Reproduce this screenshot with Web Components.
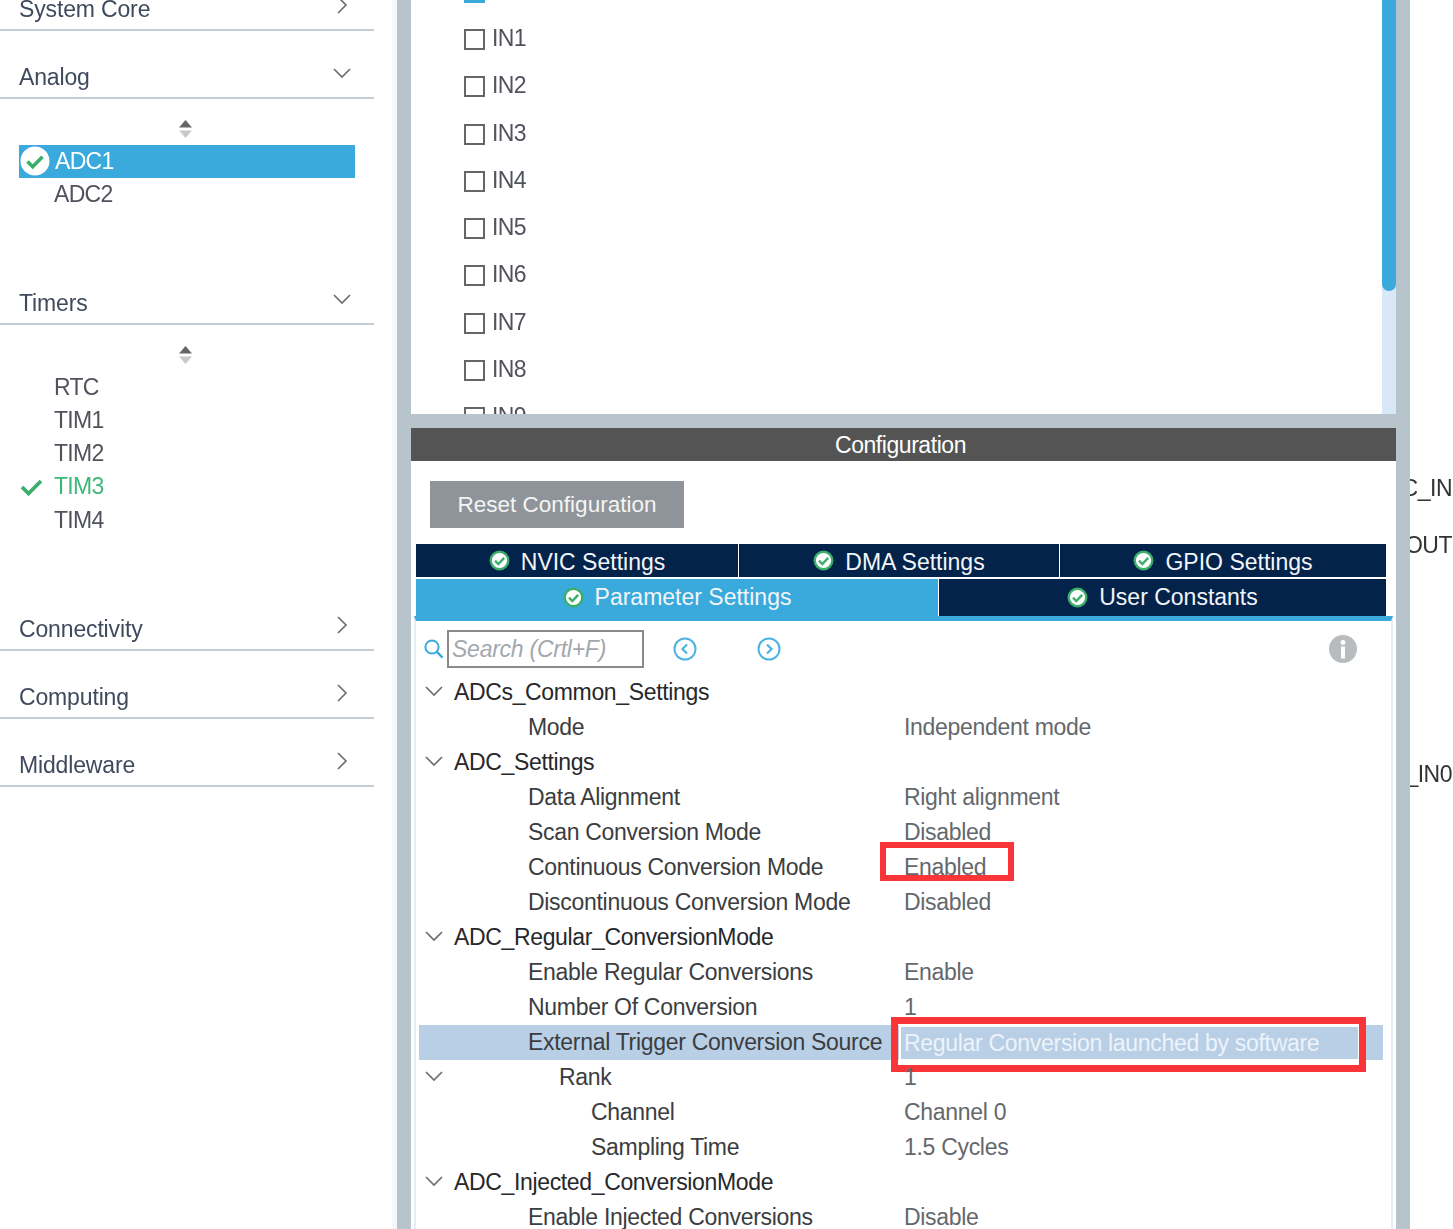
<!DOCTYPE html>
<html>
<head>
<meta charset="utf-8">
<title>Pinout and Configuration</title>
<style>
  html, body { margin: 0; height: 100%; overflow: hidden; background: #fff; }
  body { font-family: "Liberation Sans", Arial, sans-serif; }
</style>
</head>
<body>
<app-shell>
  <side-category slot="side" title-text="System Core"></side-category>
  <side-category slot="side" title-text="Analog" open style="--list-h:158px">
    <side-item state="ok">ADC1</side-item>
    <side-item>ADC2</side-item>
  </side-category>
  <side-category slot="side" title-text="Timers" open style="--list-h:258px">
    <side-item>RTC</side-item>
    <side-item>TIM1</side-item>
    <side-item>TIM2</side-item>
    <side-item state="check">TIM3</side-item>
    <side-item>TIM4</side-item>
  </side-category>
  <side-category slot="side" title-text="Connectivity"></side-category>
  <side-category slot="side" title-text="Computing"></side-category>
  <side-category slot="side" title-text="Middleware"></side-category>

  <channel-list slot="main">
    <pin-check checked></pin-check>
    <pin-check>IN1</pin-check>
    <pin-check>IN2</pin-check>
    <pin-check>IN3</pin-check>
    <pin-check>IN4</pin-check>
    <pin-check>IN5</pin-check>
    <pin-check>IN6</pin-check>
    <pin-check>IN7</pin-check>
    <pin-check>IN8</pin-check>
    <pin-check>IN9</pin-check>
  </channel-list>

  <config-panel slot="main">
    <tab-btn slot="row1" style="--w:322px;--pt:3px">NVIC Settings</tab-btn>
    <tab-btn slot="row1" style="--w:320px;--pt:3px">DMA Settings</tab-btn>
    <tab-btn slot="row1" style="--w:326px;--pt:3px">GPIO Settings</tab-btn>
    <tab-btn slot="row2" active style="--w:522px">Parameter Settings</tab-btn>
    <tab-btn slot="row2" style="--w:447px">User Constants</tab-btn>

    <tree-row slot="tree" level="0" arrow name="ADCs_Common_Settings"></tree-row>
    <tree-row slot="tree" level="1" name="Mode" value="Independent mode"></tree-row>
    <tree-row slot="tree" level="0" arrow name="ADC_Settings"></tree-row>
    <tree-row slot="tree" level="1" name="Data Alignment" value="Right alignment"></tree-row>
    <tree-row slot="tree" level="1" name="Scan Conversion Mode" value="Disabled"></tree-row>
    <tree-row slot="tree" level="1" name="Continuous Conversion Mode" value="Enabled">
      <red-mark slot="mark" style="--l:-19px;--t:-8px;--w:134px;--h:39px;--b:6px"></red-mark>
    </tree-row>
    <tree-row slot="tree" level="1" name="Discontinuous Conversion Mode" value="Disabled"></tree-row>
    <tree-row slot="tree" level="0" arrow name="ADC_Regular_ConversionMode"></tree-row>
    <tree-row slot="tree" level="1" name="Enable Regular Conversions" value="Enable"></tree-row>
    <tree-row slot="tree" level="1" name="Number Of Conversion" value="1"></tree-row>
    <tree-row slot="tree" level="1" selected name="External Trigger Conversion Source" value="Regular Conversion launched by software">
      <red-mark slot="mark" style="--l:-10px;--t:-10px;--w:475px;--h:55px;--b:7px"></red-mark>
    </tree-row>
    <tree-row slot="tree" level="2" arrow name="Rank" value="1"></tree-row>
    <tree-row slot="tree" level="3" name="Channel" value="Channel 0"></tree-row>
    <tree-row slot="tree" level="3" name="Sampling Time" value="1.5 Cycles"></tree-row>
    <tree-row slot="tree" level="0" arrow name="ADC_Injected_ConversionMode"></tree-row>
    <tree-row slot="tree" level="1" name="Enable Injected Conversions" value="Disable"></tree-row>
  </config-panel>

  <pin-label slot="pins" style="--y:474px">C_IN</pin-label>
  <pin-label slot="pins" style="--y:531px">OUT</pin-label>
  <pin-label slot="pins" style="--y:760px">_IN0</pin-label>
</app-shell>

<script>
const CHEVRON_DOWN = '<svg width="20" height="12" viewBox="0 0 20 12"><path d="M2 2l8 8 8-8" fill="none" stroke="#6b6f73" stroke-width="1.7"/></svg>'
const CHEVRON_RIGHT = '<svg width="12" height="20" viewBox="0 0 12 20"><path d="M2 2l8 8-8 8" fill="none" stroke="#6b6f73" stroke-width="1.7"/></svg>'
const OK_ICON = '<svg width="21" height="21" viewBox="0 0 21 21"><circle cx="10.5" cy="10.5" r="10" fill="#3cae6b"/><circle cx="10.5" cy="10.5" r="7.6" fill="#fff"/><path d="M6 10.7l3.3 3.3 5.9-6.2" fill="none" stroke="#3cae6b" stroke-width="2.4"/></svg>'

class AppShell extends HTMLElement {
  constructor() {
    super()
    this.attachShadow({ mode: 'open' })
    this.shadowRoot.innerHTML = `
      <style>
        :host { display: grid; grid-template-columns: 392px 5px 14px 985px 14px 43px; height: 1229px; overflow: hidden; filter: blur(.45px); }
        #side { margin-top: -37px; padding-right: 18px; box-sizing: border-box; width: 392px; }
        #fade { background: #f6f7f8; }
        .gutter { background: #b8c4cb; }
        #main { background: #b8c4cb; display: flex; flex-direction: column; gap: 14px; min-width: 0; height: 1229px; overflow: hidden; }
        #pins { position: relative; overflow: hidden; }
      </style>
      <div id="side"><slot name="side"></slot></div>
      <div id="fade"></div>
      <div class="gutter"></div>
      <div id="main"><slot name="main"></slot></div>
      <div class="gutter"></div>
      <div id="pins"><slot name="pins"></slot></div>
    `
  }
}
customElements.define('app-shell', AppShell)

class SideCategory extends HTMLElement {
  constructor() {
    super()
    this.attachShadow({ mode: 'open' })
  }
  connectedCallback() {
    const open = this.hasAttribute('open')
    this.shadowRoot.innerHTML = `
      <style>
        :host { display: block; }
        header { height: 66px; border-bottom: 2px solid #c3cdd3; display: flex; justify-content: space-between; align-items: flex-end; padding: 0 ${open ? 22 : 26}px 0 19px; }
        span { font-size: 23px; letter-spacing: -.15px; line-height: 28px; color: #3f4a5c; margin-bottom: 6px; }
        .arrow { display: flex; margin-bottom: ${open ? 18 : 14}px; }
        #list { height: var(--list-h, 0); box-sizing: border-box; }
        #sort { height: 46px; display: flex; align-items: flex-end; padding-left: 178px; box-sizing: border-box; padding-bottom: 7px; }
        #sort svg { display: block; }
        ::slotted(side-item) { margin-left: 19px; width: 336px; }
      </style>
      <header><span>${this.getAttribute('title-text')}</span><div class="arrow">${open ? CHEVRON_DOWN : CHEVRON_RIGHT}</div></header>
      ${open ? `<div id="list"><div id="sort"><svg width="15" height="18" viewBox="0 0 15 18"><path d="M7.5 0l6.5 7.5H1z" fill="#666"/><path d="M7.5 18L1 10.5h13z" fill="#c9c9c9"/></svg></div><slot></slot></div>` : ''}
    `
  }
}
customElements.define('side-category', SideCategory)

class SideItem extends HTMLElement {
  constructor() {
    super()
    this.attachShadow({ mode: 'open' })
  }
  connectedCallback() {
    const state = this.getAttribute('state')
    let icon = ''
    if (state === 'ok') icon = '<svg width="30" height="30" viewBox="0 0 30 30"><circle cx="15" cy="15" r="14.5" fill="#fff"/><path d="M7.5 15.5l5.2 5.2 9.8-10" fill="none" stroke="#3cae6b" stroke-width="3.6"/></svg>'
    if (state === 'check') icon = '<svg width="23" height="18" viewBox="0 0 23 18"><path d="M2 9l6.5 6.5L21 3" fill="none" stroke="#3cae6b" stroke-width="3.8"/></svg>'
    this.shadowRoot.innerHTML = `
      <style>
        :host { display: flex; align-items: center; height: 33.25px; font-size: 23px; letter-spacing: -.7px; color: #50535c; }
        :host([state="ok"]) { background: #3aa9dc; color: #fff; }
        :host([state="check"]) { color: #3cb878; }
        #icon { width: 35px; flex: none; display: flex; justify-content: flex-start; padding-left: 1px; box-sizing: border-box; margin-top: -1px; }
        #text { margin-bottom: 1px; }
        :host([state="ok"]) #text { margin-left: 1px; }
      </style>
      <div id="icon">${icon}</div><span id="text"><slot></slot></span>
    `
  }
}
customElements.define('side-item', SideItem)

class ChannelList extends HTMLElement {
  constructor() {
    super()
    this.attachShadow({ mode: 'open' })
    this.shadowRoot.innerHTML = `
      <style>
        :host { display: grid; grid-template-columns: 1fr 14px; height: 414px; flex: none; background: #fff; overflow: hidden; }
        #items { margin-top: -32px; }
        #track { background: #d9e8f6; }
        #thumb { height: 291px; background: #3aa9dc; border-radius: 0 0 7px 7px; }
      </style>
      <div id="items"><slot></slot></div>
      <div id="track"><div id="thumb"></div></div>
    `
  }
}
customElements.define('channel-list', ChannelList)

class PinCheck extends HTMLElement {
  constructor() {
    super()
    this.attachShadow({ mode: 'open' })
    this.shadowRoot.innerHTML = `
      <style>
        :host { display: flex; align-items: center; gap: 7px; height: 47.3px; padding-left: 53px; font-size: 23px; letter-spacing: -.6px; color: #50535c; }
        #box { width: 17px; height: 17px; border: 2px solid #666; flex: none; background: #fff; margin-top: 1px; }
        :host([checked]) #box { background: #3aa9dc; border-color: #3aa9dc; }
        span { margin-bottom: 1px; }
      </style>
      <div id="box"></div><span><slot></slot></span>
    `
  }
}
customElements.define('pin-check', PinCheck)

class ConfigPanel extends HTMLElement {
  constructor() {
    super()
    this.attachShadow({ mode: 'open' })
    this.shadowRoot.innerHTML = `
      <style>
        :host { display: block; background: #fff; flex: 1; min-height: 0; }
        #head { height: 33px; background: #535453; color: #fff; font-size: 23px; letter-spacing: -.45px; display: flex; align-items: center; justify-content: center; padding-right: 6px; box-sizing: border-box; padding-top: 2px; }
        #reset { margin: 20px 0 16px 19px; width: 254px; height: 47px; background: #8e9499; color: #f4f4f4; font-size: 22.5px; display: flex; align-items: center; justify-content: center; }
        #tabs { margin-left: 5px; width: 970px; display: flex; flex-direction: column; gap: 2px; }
        .row { display: flex; gap: 1px; }
        .row.b { height: 37px; }
        .row.a { height: 33px; }
        #panel { margin: 0 3px; border-top: 5px solid #3aa9dc; border-left: 2px solid #e6eef4; border-right: 2px solid #e6eef4; }
        #tools { height: 54px; display: flex; align-items: center; padding-left: 8px; box-sizing: border-box; padding-top: 2px; }
        #search { height: 33px; width: 190px; border: 2px solid #8a8a8a; margin-left: 3px; font-size: 23px; letter-spacing: -.25px; font-style: italic; color: #a3a8ad; display: flex; align-items: center; padding-left: 3px; margin-top: -1px; padding-top: 1px; box-sizing: content-box; }
        #prev { margin-left: 29px; }
        #next { margin-left: 60px; }
        #info { margin-left: auto; margin-right: 34px; }
        svg { display: block; flex: none; }
        #tree { margin-left: 3px; margin-right: 8px; }
      </style>
      <div id="head">Configuration</div>
      <div id="reset">Reset Configuration</div>
      <div id="tabs">
        <div class="row a"><slot name="row1"></slot></div>
        <div class="row b"><slot name="row2"></slot></div>
      </div>
      <div id="panel">
        <div id="tools">
          <svg width="20" height="20" viewBox="0 0 20 20"><circle cx="8" cy="8" r="6.6" fill="none" stroke="#3aa9dc" stroke-width="2"/><path d="M12.6 12.6l6 6" stroke="#3aa9dc" stroke-width="2.4"/></svg>
          <div id="search">Search (Crtl+F)</div>
          <svg id="prev" width="24" height="24" viewBox="0 0 24 24"><circle cx="12" cy="12" r="10.5" fill="none" stroke="#4db3e2" stroke-width="2"/><path d="M14 7.5L9.5 12l4.5 4.5" fill="none" stroke="#4db3e2" stroke-width="2.2"/></svg>
          <svg id="next" width="24" height="24" viewBox="0 0 24 24"><circle cx="12" cy="12" r="10.5" fill="none" stroke="#4db3e2" stroke-width="2"/><path d="M10 7.5l4.5 4.5-4.5 4.5" fill="none" stroke="#4db3e2" stroke-width="2.2"/></svg>
          <svg id="info" width="28" height="28" viewBox="0 0 28 28"><circle cx="14" cy="14" r="14" fill="#b9bcbe"/><circle cx="14" cy="7.5" r="2.4" fill="#fff"/><rect x="12" y="11.5" width="4" height="12" fill="#fff"/></svg>
        </div>
        <div id="tree"><slot name="tree"></slot></div>
      </div>
    `
  }
}
customElements.define('config-panel', ConfigPanel)

class TabBtn extends HTMLElement {
  constructor() {
    super()
    this.attachShadow({ mode: 'open' })
    this.shadowRoot.innerHTML = `
      <style>
        :host { display: flex; align-items: center; justify-content: center; gap: 11px; width: var(--w); background: #03234b; color: #f2f5f8; font-size: 23px; flex: none; }
        :host([active]) { background: #3aa9dc; }
        svg { display: block; flex: none; }
        span { padding-top: var(--pt, 0); }
      </style>
      ${OK_ICON}<span><slot></slot></span>
    `
  }
}
customElements.define('tab-btn', TabBtn)

class TreeRow extends HTMLElement {
  constructor() {
    super()
    this.attachShadow({ mode: 'open' })
  }
  connectedCallback() {
    const indent = [35, 109, 140, 172][this.getAttribute('level')]
    const arrow = this.hasAttribute('arrow') ? CHEVRON_DOWN : ''
    const value = this.getAttribute('value') || ''
    this.shadowRoot.innerHTML = `
      <style>
        :host { display: grid; grid-template-columns: 480px 461px 1fr; height: 35px; font-size: 23px; letter-spacing: -.3px; color: #3b3d40; align-items: stretch; }
        :host([selected]) { background: #b8cfe6; }
        #name { display: flex; align-items: center; position: relative; white-space: nowrap; padding-left: ${indent}px; box-sizing: border-box; }
        :host([level="0"]) #name { color: #26282b; letter-spacing: -.35px; }
        #arrow { position: absolute; left: 5px; top: 10px; display: flex; }
        #value { position: relative; display: flex; align-items: center; padding-left: 5px; color: #64686c; white-space: nowrap; box-sizing: border-box; }
        :host([selected]) #value { color: #edf3f9; border: 2px solid #fff; border-bottom-width: 1px; padding-left: 3px; padding-top: 0; }
      </style>
      <div id="name"><div id="arrow">${arrow}</div>${this.getAttribute('name')}</div>
      <div id="value">${value}<slot name="mark"></slot></div>
    `
  }
}
customElements.define('tree-row', TreeRow)

// red annotation drawn over the table, placed relative to its value cell
class RedMark extends HTMLElement {
  constructor() {
    super()
    this.attachShadow({ mode: 'open' })
    this.shadowRoot.innerHTML = `
      <style>
        :host { position: absolute; left: var(--l); top: var(--t); width: var(--w); height: var(--h); border: var(--b) solid #fa3538; box-sizing: border-box; }
      </style>
    `
  }
}
customElements.define('red-mark', RedMark)

class PinLabel extends HTMLElement {
  constructor() {
    super()
    this.attachShadow({ mode: 'open' })
    this.shadowRoot.innerHTML = `
      <style>
        :host { position: absolute; right: 1px; top: var(--y); font-size: 23px; letter-spacing: -.5px; line-height: 28px; color: #333; white-space: nowrap; }
      </style>
      <slot></slot>
    `
  }
}
customElements.define('pin-label', PinLabel)
</script>
</body>
</html>
